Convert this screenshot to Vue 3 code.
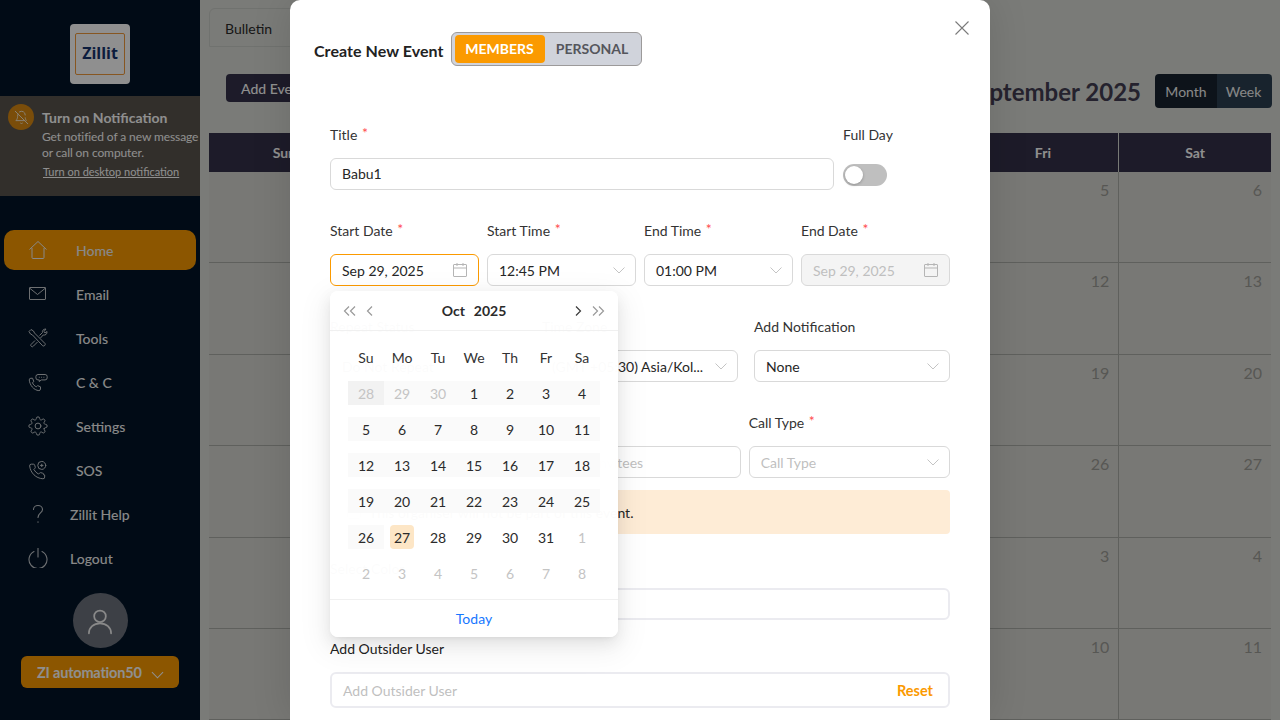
<template>
  <div class="page">
    <aside class="sidebar">
      <div class="logo-box">
        <div class="logo-inner">Zillit</div>
      </div>

      <div class="notify">
        <span class="notify-badge">
          <svg viewBox="0 0 24 24" width="15" height="15" fill="none" stroke="currentColor" stroke-width="1.6" stroke-linecap="round" stroke-linejoin="round">
            <path d="M18 8a6 6 0 0 0-9.3-5" />
            <path d="M6.3 6.3A6 6 0 0 0 6 8c0 7-3 9-3 9h14" />
            <path d="M18 12.5c.3 2.300 1 3.600 1.700 4.500" />
            <path d="M10.300 21a2 2 0 0 0 3.400 0" />
            <path d="M2 2l20 20" />
          </svg>
        </span>
        <div class="notify-text">
          <div class="notify-title">Turn on Notification</div>
          <div class="notify-desc">Get notified of a new message<br />or call on computer.</div>
          <a class="notify-link">Turn on desktop notification</a>
        </div>
      </div>

      <nav class="nav">
        <div class="nav-item active">
          <svg class="nav-icon" viewBox="0 0 20 20" fill="none" stroke="currentColor" stroke-width="1" stroke-linejoin="round">
            <path d="M1.500 9.500 10 1.500l8.500 8M4 8v9.500a1 1 0 0 0 1 1h10a1 1 0 0 0 1-1V8" />
          </svg>
          <span>Home</span>
        </div>
        <div class="nav-item">
          <svg class="nav-icon" viewBox="0 0 20 20" fill="none" stroke="currentColor" stroke-width="1">
            <rect x="1.500" y="3.500" width="16" height="12" rx="0.500" />
            <path d="M1.500 4 9.500 10.500 17.500 4" />
          </svg>
          <span>Email</span>
        </div>
        <div class="nav-item">
          <svg class="nav-icon" viewBox="0 0 20 20" fill="none" stroke="currentColor" stroke-width="1" stroke-linejoin="round">
            <path d="M1 3.500 3 1.500l2.500 1.500 1 2L17 15.500a1.700 1.700 0 0 1-2.300 2.300L4.500 7l-2-1z" />
            <path d="M7 12.500 3 16.500a1.500 1.500 0 0 0 .5 2 1.500 1.500 0 0 0 2-.5l4-4" />
            <path d="M11.500 7.500 14.500 4.500c-.5-1.500.5-3.500 3.500-3.500L16 3.500l1 1.500 2-1.500c.3 2.500-1.500 4-3.800 3.500L12.500 10" />
          </svg>
          <span>Tools</span>
        </div>
        <div class="nav-item">
          <svg class="nav-icon" viewBox="0 0 24 24" fill="none" stroke="currentColor" stroke-width="1.200" stroke-linejoin="round">
            <path d="M15 20.500a2 2 0 0 1-2 1.800C7 22 2 15.500 1.500 9.500a2 2 0 0 1 2-2H5.500l1.500 4-1.700 1.300c1 2.500 2.700 4 4.700 5l1.500-1.500 3.500 1.500z" />
            <path d="M12 3h8.500a2.500 2.500 0 0 1 2.500 2.500v1.500a2.500 2.500 0 0 1-2.500 2.500H16l-2.500 2v-2H12a2.500 2.500 0 0 1-2.500-2.500V5.500A2.500 2.500 0 0 1 12 3z" />
            <path d="M13.500 6.300h.1M16.300 6.300h.1M19 6.300h.1" stroke-linecap="round" />
          </svg>
          <span>C &amp; C</span>
        </div>
        <div class="nav-item">
          <svg class="nav-icon" viewBox="0 0 24 24" fill="none" stroke="currentColor" stroke-width="1.200" stroke-linecap="round" stroke-linejoin="round">
            <circle cx="12" cy="12" r="3.500" />
            <path d="M19.400 15a1.650 1.650 0 0 0 .33 1.820l.06.06a2 2 0 0 1 0 2.830 2 2 0 0 1-2.830 0l-.06-.06a1.650 1.650 0 0 0-1.820-.33 1.650 1.650 0 0 0-1 1.510V21a2 2 0 0 1-2 2 2 2 0 0 1-2-2v-.09A1.650 1.650 0 0 0 9 19.400a1.650 1.650 0 0 0-1.820.33l-.06.06a2 2 0 0 1-2.830 0 2 2 0 0 1 0-2.830l.06-.06a1.650 1.650 0 0 0 .33-1.820 1.650 1.650 0 0 0-1.510-1H3a2 2 0 0 1-2-2 2 2 0 0 1 2-2h.09A1.650 1.650 0 0 0 4.600 9a1.650 1.650 0 0 0-.33-1.820l-.06-.06a2 2 0 0 1 0-2.830 2 2 0 0 1 2.830 0l.06.06a1.650 1.650 0 0 0 1.820.33H9a1.650 1.650 0 0 0 1-1.510V3a2 2 0 0 1 2-2 2 2 0 0 1 2 2v.09a1.650 1.650 0 0 0 1 1.510 1.650 1.650 0 0 0 1.820-.33l.06-.06a2 2 0 0 1 2.830 0 2 2 0 0 1 0 2.830l-.06.06a1.650 1.650 0 0 0-.33 1.820V9a1.650 1.650 0 0 0 1.510 1H21a2 2 0 0 1 2 2 2 2 0 0 1-2 2h-.09a1.650 1.650 0 0 0-1.510 1z" />
          </svg>
          <span>Settings</span>
        </div>
        <div class="nav-item">
          <svg class="nav-icon" viewBox="0 0 24 24" fill="none" stroke="currentColor" stroke-width="1.200" stroke-linejoin="round" stroke-linecap="round">
            <path d="M20 18.500v2a2 2 0 0 1-2.200 2C9.500 22 3 15.500 2 7.200A2 2 0 0 1 4 5h2.500a1.500 1.500 0 0 1 1.500 1.200c.2.900.4 1.600.7 2.300a1.500 1.500 0 0 1-.4 1.500L7 11.300c1.300 2.400 3.200 4.300 5.600 5.600l1.300-1.300a1.500 1.500 0 0 1 1.500-.4c.7.300 1.500.500 2.300.7a1.500 1.500 0 0 1 1.300 1.600z" />
            <circle cx="16.500" cy="6.500" r="4.800" />
            <path d="M16.500 5v3M15 6.500h3" />
          </svg>
          <span>SOS</span>
        </div>
        <div class="nav-item tight">
          <svg class="nav-icon" viewBox="0 0 20 20" fill="none" stroke="currentColor" stroke-width="1.100" stroke-linecap="round">
            <path d="M5.500 5.500C5.500 3 7.500 1.500 10 1.500s4.500 1.700 4.500 4c0 3.500-4.500 3.500-4.500 8" />
            <path d="M10 17.800v.4" />
          </svg>
          <span>Zillit Help</span>
        </div>
        <div class="nav-item tight">
          <svg class="nav-icon" viewBox="0 0 20 20" fill="none" stroke="currentColor" stroke-width="1.100" stroke-linecap="round">
            <path d="M6 3.500a9 9 0 1 0 8 0" />
            <path d="M10 0.500V9" />
          </svg>
          <span>Logout</span>
        </div>
      </nav>

      <div class="avatar">
        <svg viewBox="0 0 24 24" width="28" height="28" fill="none" stroke="currentColor" stroke-width="1.500" stroke-linecap="round">
          <circle cx="12" cy="8" r="5" />
          <path d="M2.500 22.500c0-5 4-8.500 9.500-8.500s9.500 3.500 9.500 8.500" />
        </svg>
      </div>
      <button class="user-btn">
        <span>ZI automation50</span>
        <svg viewBox="0 0 14 8" width="13" height="8" fill="none" stroke="currentColor" stroke-width="1.100"><path d="M1 1l6 6 6-6" /></svg>
      </button>
    </aside>

    <main class="main">
      <div class="tabs">
        <div class="tab">Bulletin</div>
      </div>
      <div class="toolbar">
        <button class="add-btn">Add Event</button>
        <h2 class="month-title">September 2025</h2>
        <div class="view-switch">
          <span class="view-on">Month</span>
          <span class="view-off">Week</span>
        </div>
      </div>
      <div class="calendar">
        <div v-for="d in weekHeads" :key="d" class="cal-head">{{ d }}</div>
        <div v-for="(n, i) in monthCells" :key="i" class="cal-cell">{{ n }}</div>
      </div>
    </main>

    <div class="overlay">
      <section class="modal">
        <button class="close" aria-label="Close">
          <svg viewBox="0 0 14 14" width="14" height="14" fill="none" stroke="currentColor" stroke-width="1.100"><path d="M0.500 0.500l13 13M13.500 0.500l-13 13" /></svg>
        </button>
        <header class="modal-head">
          <h3>Create New Event</h3>
          <div class="segment">
            <span class="seg seg-on">MEMBERS</span>
            <span class="seg">PERSONAL</span>
          </div>
        </header>

        <form class="form" @submit.prevent>
          <div class="row title-row">
            <div class="field">
              <label>Title <i>*</i></label>
              <div class="input title-input">Babu1</div>
            </div>
            <div class="field toggle">
              <label>Full Day</label>
              <div class="switch"><span class="knob"></span></div>
            </div>
          </div>

          <div class="row four">
            <div class="field date-field">
              <label>Start Date <i>*</i></label>
              <div class="input focus">
                <span>Sep 29, 2025</span>
                <svg class="cal-icon" viewBox="0 0 14 14" width="14" height="14" fill="none" stroke="currentColor"><rect x="0.500" y="1.500" width="13" height="12" rx="0.500" /><path d="M0.500 5h13M4 0v3M10 0v3" /></svg>
              </div>

              <div class="picker">
                <div class="picker-head">
                  <span class="arrows">
                    <svg viewBox="0 0 14 10" width="14" height="10" class="pale"><path d="M6 0.500 1.500 5 6 9.500M12 0.500 7.500 5 12 9.500" /></svg>
                    <svg viewBox="0 0 7 10" width="7" height="10" class="pale"><path d="M6 0.500 1.500 5 6 9.500" /></svg>
                  </span>
                  <strong><span>Oct</span><span>2025</span></strong>
                  <span class="arrows">
                    <svg viewBox="0 0 7 10" width="7" height="10"><path d="M1 0.500 5.500 5 1 9.500" /></svg>
                    <svg viewBox="0 0 14 10" width="14" height="10" class="pale"><path d="M2 0.500 6.500 5 2 9.500M8 0.500 12.500 5 8 9.500" /></svg>
                  </span>
                </div>
                <div class="picker-body">
                  <div v-for="d in pickerHeads" :key="d" class="pick-head">{{ d }}</div>
                  <div
                    v-for="c in pickerCells"
                    :key="c.key"
                    class="pick-cell"
                    :class="{ muted: c.muted, strip: c.strip, start: c.start }"
                  >
                    <span :class="{ today: c.today }">{{ c.n }}</span>
                  </div>
                </div>
                <div class="picker-foot">Today</div>
              </div>
            </div>
            <div class="field">
              <label>Start Time <i>*</i></label>
              <div class="input">
                <span>12:45 PM</span>
                <svg class="chev" viewBox="0 0 12 7" width="12" height="7" fill="none" stroke="currentColor"><path d="M0.500 0.500 6 6l5.500-5.500" /></svg>
              </div>
            </div>
            <div class="field">
              <label>End Time <i>*</i></label>
              <div class="input">
                <span>01:00 PM</span>
                <svg class="chev" viewBox="0 0 12 7" width="12" height="7" fill="none" stroke="currentColor"><path d="M0.500 0.500 6 6l5.500-5.500" /></svg>
              </div>
            </div>
            <div class="field">
              <label>End Date <i>*</i></label>
              <div class="input disabled">
                <span>Sep 29, 2025</span>
                <svg class="cal-icon" viewBox="0 0 14 14" width="14" height="14" fill="none" stroke="currentColor"><rect x="0.500" y="1.500" width="13" height="12" rx="0.500" /><path d="M0.500 5h13M4 0v3M10 0v3" /></svg>
              </div>
            </div>
          </div>

          <div class="row three-wide">
            <div class="field">
              <label>Repeat Status</label>
              <div class="input">Do Not Repeat</div>
            </div>
            <div class="field">
              <label>Time Zone</label>
              <div class="input">
                <span class="zone">(GMT +05:30) Asia/Kol...</span>
                <svg class="chev" viewBox="0 0 12 7" width="12" height="7" fill="none" stroke="currentColor"><path d="M0.500 0.500 6 6l5.500-5.500" /></svg>
              </div>
            </div>
            <div class="field">
              <label>Add Notification</label>
              <div class="input">
                <span>None</span>
                <svg class="chev" viewBox="0 0 12 7" width="12" height="7" fill="none" stroke="currentColor"><path d="M0.500 0.500 6 6l5.500-5.500" /></svg>
              </div>
            </div>
          </div>

          <div class="row three-tight">
            <div class="field">
              <label>&nbsp;</label>
              <div class="input"></div>
            </div>
            <div class="field">
              <label>Invitees</label>
              <div class="input holder invitees">Select Invitees</div>
            </div>
            <div class="field">
              <label>Call Type <i>*</i></label>
              <div class="input holder">
                <span>Call Type</span>
                <svg class="chev" viewBox="0 0 12 7" width="12" height="7" fill="none" stroke="currentColor"><path d="M0.500 0.500 6 6l5.500-5.500" /></svg>
              </div>
            </div>
          </div>

          <div class="notice">
            <span class="check"></span>
            <span>This organiser will not be part of this event.</span>
          </div>

          <div class="field color-field">
            <label>Select Color</label>
            <div class="input soft"></div>
          </div>

          <div class="field outsider">
            <label>Add Outsider User</label>
            <div class="input soft tall holder">
              <span>Add Outsider User</span>
              <b>Reset</b>
            </div>
          </div>
        </form>
      </section>
    </div>
  </div>
</template>

<script setup>
const weekHeads = ['Sun', 'Mon', 'Tue', 'Wed', 'Thu', 'Fri', 'Sat']
const pickerHeads = ['Su', 'Mo', 'Tu', 'We', 'Th', 'Fr', 'Sa']

const monthCells = [
  31, 1, 2, 3, 4, 5, 6,
  7, 8, 9, 10, 11, 12, 13,
  14, 15, 16, 17, 18, 19, 20,
  21, 22, 23, 24, 25, 26, 27,
  28, 29, 30, 1, 2, 3, 4,
  5, 6, 7, 8, 9, 10, 11
]

const pickerNums = [
  28, 29, 30, 1, 2, 3, 4,
  5, 6, 7, 8, 9, 10, 11,
  12, 13, 14, 15, 16, 17, 18,
  19, 20, 21, 22, 23, 24, 25,
  26, 27, 28, 29, 30, 31, 1,
  2, 3, 4, 5, 6, 7, 8
]

const pickerCells = pickerNums.map((n, i) => ({
  key: i,
  n,
  muted: i < 3 || i > 33,
  strip: i < 29,
  start: i === 0,
  today: i === 29
}))
</script>

<style>
html,
body {
  margin: 0;
  background: #d6d9d3;
}
</style>

<style scoped>
* {
  box-sizing: border-box;
}

.page {
  position: relative;
  display: flex;
  width: 1280px;
  height: 720px;
  overflow: hidden;
  font-family: Lato, "Liberation Sans", sans-serif;
  font-size: 14px;
  color: #2b2b2b;
  background: #dadcd6;
}

/* sidebar */
.sidebar {
  flex: 0 0 200px;
  display: flex;
  flex-direction: column;
  align-items: center;
  padding-top: 24px;
  background: #021528;
  color: #fff;
}

.logo-box {
  display: flex;
  align-items: center;
  justify-content: center;
  width: 60px;
  height: 60px;
  background: #fff;
  border-radius: 4px;
}

.logo-inner {
  display: flex;
  align-items: center;
  justify-content: center;
  width: 50px;
  height: 42px;
  padding-bottom: 2px;
  border: 1px solid #f09a3c;
  border-radius: 2px;
  font-family: "Open Sans", sans-serif;
  font-size: 16px;
  font-weight: 700;
  color: #16346f;
}

.notify {
  display: flex;
  gap: 8px;
  align-self: stretch;
  height: 100px;
  margin-top: 12px;
  padding: 8px 0 0 8px;
  background: #5a544d;
}

.notify-badge {
  display: flex;
  align-items: center;
  justify-content: center;
  flex: 0 0 26px;
  height: 26px;
  border-radius: 50%;
  background: #d98a12;
  color: #f5e6cc;
}

.notify-text {
  white-space: nowrap;
}

.notify-title {
  margin-top: 4px;
  font-size: 14px;
  line-height: 20px;
  font-weight: 700;
}

.notify-desc {
  margin-top: 1px;
  font-size: 12px;
  line-height: 16px;
  letter-spacing: -0.1px;
}

.notify-link {
  display: inline-block;
  margin: 3px 0 0 1px;
  font-size: 11px;
  line-height: 16px;
  text-decoration: underline;
}

.nav {
  display: flex;
  flex-direction: column;
  gap: 4px;
  align-self: stretch;
  margin-top: 34px;
  padding: 0 4px;
}

.nav-item {
  display: flex;
  align-items: center;
  gap: 28px;
  height: 40px;
  padding-left: 24px;
  border-radius: 10px;
  font-size: 14px;
  font-weight: 500;
  color: #f2f2f2;
}

.nav-item.active {
  background: #fa9a00;
}

.nav-item.active .nav-icon {
  color: #f4f4f4;
}

.nav-item.tight {
  gap: 22px;
}

.nav-icon {
  flex: 0 0 20px;
  width: 20px;
  height: 20px;
  color: #c4c8cc;
}

.avatar {
  display: flex;
  align-items: center;
  justify-content: center;
  width: 55px;
  height: 55px;
  margin-top: 15px;
  border-radius: 50%;
  background: #6e737e;
  color: #f4f4f4;
}

.user-btn {
  display: flex;
  align-items: center;
  gap: 9px;
  width: 158px;
  height: 32px;
  margin-top: 8px;
  padding: 0 0 0 16px;
  border: 0;
  border-radius: 6px;
  background: #fa9a00;
  color: #fff;
  font: 700 14.5px Lato, sans-serif;
  letter-spacing: -0.2px;
}

.user-btn svg {
  margin-top: 6px;
}

/* calendar behind the modal */
.main {
  flex: 1;
  min-width: 0;
  padding: 8px 8px 0 9px;
}

.tabs {
  display: flex;
  height: 39px;
}

.tab {
  display: flex;
  align-items: center;
  width: 90px;
  padding: 2px 0 0 15px;
  border: 1px solid #c8cbc6;
  border-radius: 6px 6px 0 0;
  color: #2a2a2a;
}

.toolbar {
  display: flex;
  align-items: flex-start;
  height: 59px;
  margin-top: 27px;
  padding-left: 17px;
}

.add-btn {
  height: 28px;
  width: 96px;
  padding: 1px 0 0 15px;
  border: 0;
  border-radius: 4px;
  background: #353149;
  color: #fff;
  font: 500 14px Lato, sans-serif;
  text-align: left;
}

.month-title {
  margin: 2px 14px 0 auto;
  font-size: 24px;
  line-height: 32px;
  font-weight: 700;
  color: #423e52;
}

.view-switch {
  display: flex;
  height: 34px;
  overflow: hidden;
  border-radius: 4px;
  color: #f2f2f2;
  line-height: 36px;
}

.view-on {
  width: 62px;
  text-align: center;
  background: #18232f;
}

.view-off {
  width: 55px;
  padding-right: 2px;
  text-align: center;
  background: #2c3f50;
}

.calendar {
  display: grid;
  grid-template-columns: repeat(7, 1fr);
  grid-auto-rows: 91.4px;
  grid-template-rows: 39px;
  margin-right: 1px;
}

.cal-head {
  display: flex;
  align-items: center;
  justify-content: center;
  background: #353149;
  border-right: 1px solid #d6d9d3;
  color: #fff;
  font-weight: 700;
}

.cal-head:nth-child(7) {
  border-right: 0;
}

.cal-cell {
  padding: 8px 9px 0 0;
  text-align: right;
  font-size: 16px;
  line-height: 20px;
  color: #9c9c97;
  background: #d7d6d0;
  border-right: 1px solid #a9aba6;
  border-bottom: 1px solid #a9aba6;
}

.cal-cell:nth-child(7n) {
  border-right: 0;
}

/* modal */
.overlay {
  position: absolute;
  inset: 0;
  display: flex;
  justify-content: center;
  background: rgba(0, 0, 0, 0.44);
}

.modal {
  position: relative;
  width: 700px;
  height: 720px;
  background: #fff;
  border-radius: 10px 10px 0 0;
  box-shadow: 0 0 40px rgba(0, 0, 0, 0.12);
}

.close {
  position: absolute;
  top: 21px;
  right: 21px;
  padding: 0;
  border: 0;
  background: none;
  color: #7a7a7a;
  line-height: 0;
}

.modal-head {
  display: flex;
  align-items: center;
  gap: 7px;
  padding: 32px 0 0 24px;
}

.modal-head h3 {
  margin: 2px 0 0;
  font-size: 16px;
  font-weight: 700;
  letter-spacing: 0.06px;
  color: #222;
}

.segment {
  display: flex;
  height: 34px;
  padding: 2px 3px;
  border: 1px solid #9c9a9a;
  border-radius: 6px;
  background: #d0d3db;
}

.seg {
  display: flex;
  align-items: center;
  justify-content: center;
  width: 90px;
  border-radius: 4px;
  font-size: 14px;
  font-weight: 700;
  color: #55565c;
  padding-bottom: 2px;
}

.seg + .seg {
  width: 93px;
  padding-left: 2px;
}

.seg-on {
  background: #fb9a00;
  color: #fff;
}

.form {
  display: flex;
  flex-direction: column;
  padding: 58px 40px 0;
}

.row {
  display: grid;
  margin-bottom: 30px;
}

.title-row {
  grid-template-columns: 504px 107px;
  gap: 9px;
}

.four {
  grid-template-columns: repeat(4, 149px);
  gap: 8px;
}

.three-wide {
  grid-template-columns: repeat(3, 196px);
  gap: 16px;
}

.three-tight {
  grid-template-columns: repeat(3, 1fr);
  gap: 8px;
  margin-bottom: 12px;
}

.field {
  position: relative;
  min-width: 0;
}

.field label {
  display: block;
  height: 22px;
  margin-bottom: 12px;
  font-size: 14px;
  line-height: 22px;
  color: #333;
}

.field.toggle label {
  margin-bottom: 18px;
}

.field label i {
  margin-left: 1px;
  font-style: normal;
  color: #ff4d4f;
  position: relative;
  top: -2px;
}

.input {
  display: flex;
  align-items: center;
  justify-content: space-between;
  height: 32px;
  padding: 0 11px;
  border: 1px solid #d9d9d9;
  border-radius: 6px;
  background: #fff;
  color: #262626;
  white-space: nowrap;
  overflow: hidden;
}

.title-input {
  padding-bottom: 2px;
}

.zone {
  margin-left: -2px;
}

.input.invitees {
  padding-left: 14px;
}

.input.focus {
  border-color: #fb9a00;
}

.input.disabled {
  background: #f4f4f4;
  color: #bfbfbf;
}

.input.holder {
  color: #bfbfbf;
}

.input.soft {
  border: 2px solid #ebebf0;
}

.input.tall {
  height: 36px;
  padding-right: 15px;
}

.input.tall b {
  color: #fb9a00;
  font-size: 14.5px;
  font-weight: 700;
}

.chev {
  flex: none;
  margin-right: -1px;
  color: #c4c4c4;
}

.cal-icon {
  flex: none;
  color: #b5b5b5;
}

.switch {
  display: flex;
  align-items: center;
  width: 44px;
  height: 22px;
  padding-left: 2px;
  border-radius: 11px;
  background: #bfbfbf;
}

.knob {
  width: 18px;
  height: 18px;
  border-radius: 50%;
  background: #fff;
  box-shadow: 0 1px 3px rgba(0, 0, 0, 0.25);
}

.notice {
  display: flex;
  align-items: center;
  gap: 8px;
  height: 44px;
  padding-left: 17px;
  border-radius: 4px;
  background: #feecd6;
  color: #262626;
}

.check {
  width: 14px;
  height: 14px;
  border: 1px solid #c9c9c9;
  border-radius: 2px;
  background: #fff;
}

.color-field {
  margin-top: 24px;
}

.color-field label {
  margin-bottom: 8px;
}

.outsider {
  margin-top: 18px;
}

.outsider label {
  color: #222;
}

/* date popup */
.picker {
  position: absolute;
  top: 71px;
  left: 0;
  z-index: 5;
  width: 288px;
  height: 346px;
  border-radius: 8px;
  background: rgba(255, 255, 255, 0.985);
  box-shadow: 0 6px 16px rgba(0, 0, 0, 0.08), 0 3px 6px -4px rgba(0, 0, 0, 0.12), 0 9px 28px 8px rgba(0, 0, 0, 0.05);
}

.picker-head {
  display: flex;
  align-items: center;
  justify-content: space-between;
  height: 40px;
  padding: 0 13px;
  border-bottom: 1px solid #f0f0f0;
}

.picker-head strong {
  display: flex;
  gap: 9px;
  font-weight: 700;
  color: #2b2b2b;
}

.arrows {
  display: flex;
  align-items: center;
  gap: 9px;
}

.arrows svg {
  fill: none;
  stroke: #3a3a3a;
  stroke-width: 1.200;
}

.arrows svg.pale {
  stroke: #9a9a9a;
}

.picker-body {
  display: grid;
  grid-template-columns: repeat(7, 36px);
  grid-auto-rows: 36px;
  padding: 8px 18px 0;
}

.pick-head {
  display: flex;
  align-items: center;
  justify-content: center;
  color: #333;
}

.pick-cell {
  display: flex;
  align-items: center;
  justify-content: center;
  color: #2b2b2b;
  position: relative;
}

.pick-cell.muted {
  color: #c4c4c4;
}

.pick-cell.strip::before {
  content: "";
  position: absolute;
  left: 0;
  right: 0;
  top: 6px;
  height: 24px;
  background: #fafafa;
}

.pick-cell.start::before {
  background: #f2f2f2;
}

.pick-cell span {
  position: relative;
  display: flex;
  align-items: center;
  justify-content: center;
  width: 24px;
  height: 24px;
}

.pick-cell span.today {
  border-radius: 4px;
  background: #fde6c6;
}

.picker-foot {
  position: absolute;
  left: 0;
  right: 0;
  bottom: 0;
  height: 38px;
  line-height: 38px;
  text-align: center;
  border-top: 1px solid #f0f0f0;
  color: #1677ff;
}
</style>
